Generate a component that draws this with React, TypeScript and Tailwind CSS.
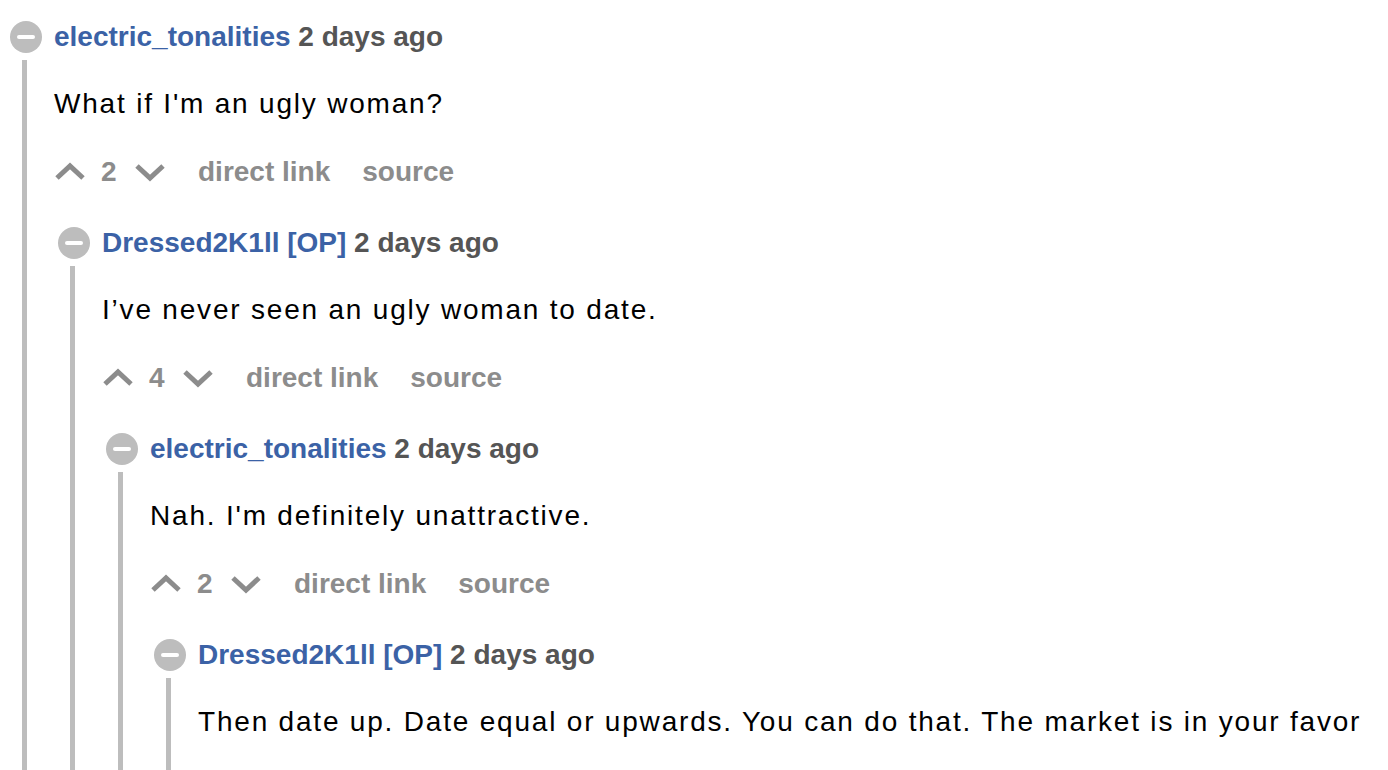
import type { ReactNode } from "react";

type CommentData = {
  author: string;
  op?: boolean;
  time: string;
  body: string;
  score?: number;
  replies?: CommentData[];
};

const thread: CommentData = {
  author: "electric_tonalities",
  time: "2 days ago",
  body: "What if I'm an ugly woman?",
  score: 2,
  replies: [
    {
      author: "Dressed2K1ll",
      op: true,
      time: "2 days ago",
      body: "I’ve never seen an ugly woman to date.",
      score: 4,
      replies: [
        {
          author: "electric_tonalities",
          time: "2 days ago",
          body: "Nah. I'm definitely unattractive.",
          score: 2,
          replies: [
            {
              author: "Dressed2K1ll",
              op: true,
              time: "2 days ago",
              // votes row of this one sits below the fold
              body: "Then date up. Date equal or upwards. You can do that. The market is in your favor",
            },
          ],
        },
      ],
    },
  ],
};

function Chevron({ down }: { down?: boolean }) {
  return (
    <svg width="32" height="20" viewBox="0 0 32 20" className="shrink-0">
      <path
        d={down ? "M3 4 L16 16 L29 4" : "M3 16 L16 4 L29 16"}
        fill="none"
        stroke="#8c8c8c"
        strokeWidth="5"
      />
    </svg>
  );
}

function Collapse() {
  return (
    <div className="w-[32px] h-[32px] rounded-full bg-[#bdbdbd] flex items-center justify-center shrink-0">
      <div className="w-[18px] h-[4px] bg-white rounded-sm" />
    </div>
  );
}

function Comment({ c, nested }: { c: CommentData; nested?: boolean }): ReactNode {
  return (
    <div className={nested ? "ml-[4px] mt-[40px]" : ""}>
      <div className="flex items-center gap-[12px] h-[32px]">
        <Collapse />
        <div className="text-[28px] font-bold leading-[32px] whitespace-nowrap">
          <span className="text-[#3b62a6]">
            {c.author}
            {c.op ? " [OP]" : ""}
          </span>{" "}
          <span className="text-[#555555]">{c.time}</span>
        </div>
      </div>
      <div className="flex">
        <div className="w-[44px] shrink-0 pl-[12px] pt-[7px]">
          <div className="w-[5px] h-full bg-[#bdbdbd]" />
        </div>
        <div className="flex-1 min-w-0">
          <p className="mt-[36px] text-[28px] leading-[30px] tracking-[1.8px] text-black whitespace-nowrap">
            {c.body}
          </p>
          {c.score !== undefined ? (
            <div className="mt-[38px] h-[30px] flex items-center text-[28px] font-bold text-[#8c8c8c]">
              <Chevron />
              <span className="ml-[15px] w-[18px]">{c.score}</span>
              <span className="ml-[15px]">
                <Chevron down />
              </span>
              <span className="ml-[32px]">direct link</span>
              <span className="ml-[32px]">source</span>
            </div>
          ) : (
            <div className="h-[80px]" />
          )}
          {c.replies?.map((r, i) => (
            <Comment key={i} c={r} nested />
          ))}
        </div>
      </div>
    </div>
  );
}

export default function App() {
  return (
    <div className="bg-white h-screen overflow-hidden pl-[10px] pt-[21px] font-['Liberation_Sans',Arial,sans-serif]">
      <Comment c={thread} />
    </div>
  );
}
